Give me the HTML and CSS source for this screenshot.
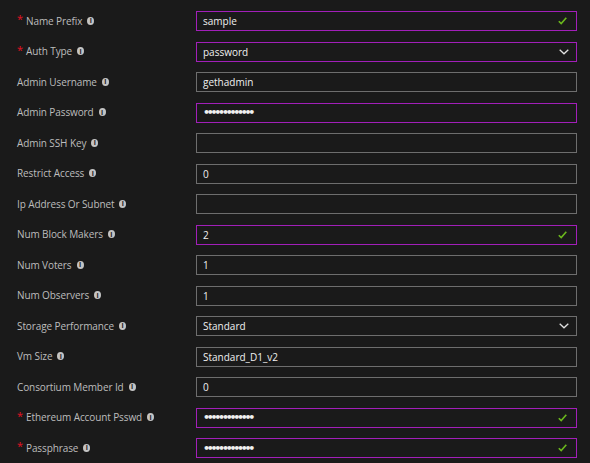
FILE: index.html
```html
<!DOCTYPE html>
<html>
<head>
<meta charset="utf-8">
<link rel="stylesheet" href="styles.css">
</head>
<body>
<div class="form">
  <div class="row">
    <div class="label"><span class="req">*</span><span class="txt">Name Prefix</span><span class="info">i</span></div>
    <div class="field active"><span class="val">sample</span><svg class="check" width="9" height="8" viewBox="0 0 9 8"><path d="M0.8 4.2 L3.2 6.6 L8.3 0.8" fill="none" stroke="#6bb81d" stroke-width="1.6"/></svg></div>
  </div>
  <div class="row">
    <div class="label"><span class="req">*</span><span class="txt">Auth Type</span><span class="info">i</span></div>
    <div class="field active"><span class="val">password</span><svg class="chev" width="10" height="6" viewBox="0 0 10 6"><path d="M0.7 0.7 L5 4.8 L9.3 0.7" fill="none" stroke="#e0e0e0" stroke-width="1.3"/></svg></div>
  </div>
  <div class="row">
    <div class="label plain"><span class="txt">Admin Username</span><span class="info">i</span></div>
    <div class="field"><span class="val">gethadmin</span></div>
  </div>
  <div class="row">
    <div class="label plain"><span class="txt">Admin Password</span><span class="info">i</span></div>
    <div class="field active"><span class="val dots">•••••••••••••</span></div>
  </div>
  <div class="row">
    <div class="label plain"><span class="txt">Admin SSH Key</span><span class="info">i</span></div>
    <div class="field"><span class="val"></span></div>
  </div>
  <div class="row">
    <div class="label plain"><span class="txt">Restrict Access</span><span class="info">i</span></div>
    <div class="field"><span class="val">0</span></div>
  </div>
  <div class="row">
    <div class="label plain"><span class="txt">Ip Address Or Subnet</span><span class="info">i</span></div>
    <div class="field"><span class="val"></span></div>
  </div>
  <div class="row">
    <div class="label plain"><span class="txt">Num Block Makers</span><span class="info">i</span></div>
    <div class="field active"><span class="val">2</span><svg class="check" width="9" height="8" viewBox="0 0 9 8"><path d="M0.8 4.2 L3.2 6.6 L8.3 0.8" fill="none" stroke="#6bb81d" stroke-width="1.6"/></svg></div>
  </div>
  <div class="row">
    <div class="label plain"><span class="txt">Num Voters</span><span class="info">i</span></div>
    <div class="field"><span class="val">1</span></div>
  </div>
  <div class="row">
    <div class="label plain"><span class="txt">Num Observers</span><span class="info">i</span></div>
    <div class="field"><span class="val">1</span></div>
  </div>
  <div class="row">
    <div class="label plain"><span class="txt">Storage Performance</span><span class="info">i</span></div>
    <div class="field"><span class="val">Standard</span><svg class="chev" width="10" height="6" viewBox="0 0 10 6"><path d="M0.7 0.7 L5 4.8 L9.3 0.7" fill="none" stroke="#e0e0e0" stroke-width="1.3"/></svg></div>
  </div>
  <div class="row">
    <div class="label plain"><span class="txt">Vm Size</span><span class="info">i</span></div>
    <div class="field"><span class="val">Standard_D1_v2</span></div>
  </div>
  <div class="row">
    <div class="label plain"><span class="txt">Consortium Member Id</span><span class="info">i</span></div>
    <div class="field"><span class="val">0</span></div>
  </div>
  <div class="row">
    <div class="label"><span class="req">*</span><span class="txt">Ethereum Account Psswd</span><span class="info">i</span></div>
    <div class="field active"><span class="val dots">•••••••••••••</span><svg class="check" width="9" height="8" viewBox="0 0 9 8"><path d="M0.8 4.2 L3.2 6.6 L8.3 0.8" fill="none" stroke="#6bb81d" stroke-width="1.6"/></svg></div>
  </div>
  <div class="row">
    <div class="label"><span class="req">*</span><span class="txt">Passphrase</span><span class="info">i</span></div>
    <div class="field active"><span class="val dots">•••••••••••••</span><svg class="check" width="9" height="8" viewBox="0 0 9 8"><path d="M0.8 4.2 L3.2 6.6 L8.3 0.8" fill="none" stroke="#6bb81d" stroke-width="1.6"/></svg></div>
  </div>
</div>
</body>
</html>
```
FILE: styles.css
```css
html, body {
  margin: 0;
  padding: 0;
  background: #1a1a1a;
  width: 590px;
  height: 463px;
  overflow: hidden;
}
body {
  font-family: "Open Sans", "Noto Sans", sans-serif;
  font-size: 10px;
}
.form {
  display: flex;
  flex-direction: column;
  gap: 10.5px;
  padding-top: 11px;
}
.row {
  display: flex;
  align-items: center;
  height: 20px;
}
.label {
  width: 196px;
  box-sizing: border-box;
  padding-left: 17px;
  display: flex;
  align-items: center;
  color: #bdbdbd;
  height: 20px;
  padding-bottom: 1px;
}
.req {
  color: #e81123;
  width: 9px;
  font-size: 11px;
  position: relative;
  top: -2px;
}
.txt {
  white-space: nowrap;
  letter-spacing: -0.1px;
}
.info {
  display: inline-flex;
  align-items: center;
  justify-content: center;
  width: 7px;
  height: 8px;
  border-radius: 50%;
  background: #c4c4c4;
  color: #1a1a1a;
  font-size: 7px;
  font-weight: 700;
  margin-left: 5px;
  line-height: 1;
}
.field {
  width: 381px;
  height: 20px;
  box-sizing: border-box;
  border: 1px solid #6e6e6e;
  display: flex;
  align-items: center;
  padding: 0 6px;
  color: #f0f0f0;
}
.field.active {
  border-color: #a21fb9;
}
.val {
  flex: 1;
  white-space: nowrap;
}
.dots {
  font-family: "DejaVu Sans", sans-serif;
  font-size: 11px;
  letter-spacing: -3.25px;
  font-weight: 700;
}
.check {
  margin-right: 3px;
}
.chev {
  margin-right: 1px;
}
```
